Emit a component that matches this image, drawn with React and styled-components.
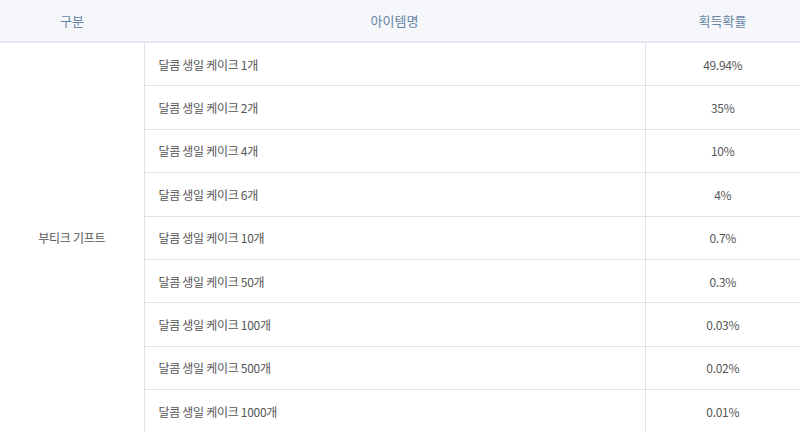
import styled, { createGlobalStyle } from 'styled-components';

const Global = createGlobalStyle`
  html, body { margin: 0; padding: 0; background: #fff; }
  body { font-family: "Noto Sans CJK KR", "Noto Sans", sans-serif; }
`;

const Table = styled.table`
  width: 800px;
  border-collapse: collapse;
  table-layout: fixed;
  font-size: 12px;
  color: #555;
`;

const HeadCell = styled.th`
  height: 41px;
  padding: 0;
  background: #f5f7fa;
  border-bottom: 2px solid #e3e8ee;
  color: #6585a6;
  font-weight: 400;
  font-size: 13px;
  text-align: center;
`;

const Cell = styled.td`
  height: 42.4px;
  padding: 0 ${p => p.$left ? '14px' : '0'};
  border-bottom: 1px solid #dfe3e8;
  border-left: ${p => p.$first ? 'none' : '1px solid #dfe3e8'};
  text-align: ${p => p.$left ? 'left' : 'center'};
  vertical-align: middle;
  letter-spacing: -0.3px;
  white-space: nowrap;
`;

const rows = [
  ['달콤 생일 케이크 1개', '49.94%'],
  ['달콤 생일 케이크 2개', '35%'],
  ['달콤 생일 케이크 4개', '10%'],
  ['달콤 생일 케이크 6개', '4%'],
  ['달콤 생일 케이크 10개', '0.7%'],
  ['달콤 생일 케이크 50개', '0.3%'],
  ['달콤 생일 케이크 100개', '0.03%'],
  ['달콤 생일 케이크 500개', '0.02%'],
  ['달콤 생일 케이크 1000개', '0.01%'],
];

export default function App() {
  return (
    <>
      <Global />
      <Table>
        <colgroup>
          <col style={{ width: 144 }} />
          <col style={{ width: 501 }} />
          <col />
        </colgroup>
        <thead>
          <tr>
            <HeadCell>구분</HeadCell>
            <HeadCell>아이템명</HeadCell>
            <HeadCell>획득확률</HeadCell>
          </tr>
        </thead>
        <tbody>
          {rows.map(([name, rate], i) => (
            <tr key={name}>
              {i === 0 && <Cell $first rowSpan={rows.length}>부티크 기프트</Cell>}
              <Cell $left>{name}</Cell>
              <Cell>{rate}</Cell>
            </tr>
          ))}
        </tbody>
      </Table>
    </>
  );
}
